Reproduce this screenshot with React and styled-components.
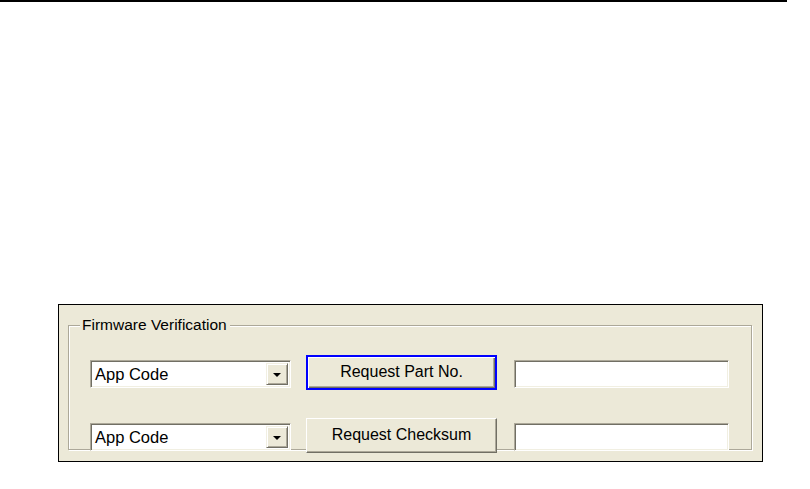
import styled, { createGlobalStyle } from 'styled-components'

const GlobalStyle = createGlobalStyle`
  html, body {
    margin: 0;
    padding: 0;
    background: #ffffff;
  }
  body {
    font-family: "Liberation Sans", Arial, sans-serif;
  }
`

const rows = [
  { id: 'part', label: 'Request Part No.', focused: true },
  { id: 'sum', label: 'Request Checksum', focused: false },
]

const App = () => {
  return (
    <>
      <GlobalStyle />
      <Page>
        <TopRule />
        <Dialog>
          <GroupBox>
            <Legend>Firmware Verification</Legend>
            {rows.map((row) => (
              <Row key={row.id}>
                <Combo>
                  <ComboText>App Code</ComboText>
                  <ComboButton>
                    <Arrow />
                  </ComboButton>
                </Combo>
                <Button $focused={row.focused}>{row.label}</Button>
                <TextBox />
              </Row>
            ))}
          </GroupBox>
        </Dialog>
      </Page>
    </>
  )
}

const Page = styled.div`
  width: 810px;
  height: 489px;
  display: flex;
  flex-direction: column;
`

const TopRule = styled.div`
  width: 787px;
  height: 2px;
  background: #000;
  margin-bottom: 302px;
`

const Dialog = styled.div`
  margin-left: 58px;
  width: 705px;
  height: 158px;
  border: 1px solid #000;
  background: #ece9d8;
  padding: 20px 10px 11px 9px;
  box-sizing: border-box;
`

const GroupBox = styled.div`
  position: relative;
  height: 100%;
  box-sizing: border-box;
  border: 1px solid #aca899;
  box-shadow: inset 1px 1px 0 #fff, 1px 1px 0 #fff;
  padding: 29px 0 0 21px;
  display: flex;
  flex-direction: column;
  gap: 28px;
`

const Legend = styled.span`
  position: absolute;
  left: 11px;
  top: -10px;
  padding: 0 3px 0 2px;
  background: #ece9d8;
  font-size: 15.5px;
  line-height: 18px;
  color: #000;
`

const Row = styled.div`
  display: flex;
  align-items: center;
  height: 35px;
`

const sunken = `
  border-style: solid;
  border-width: 1px;
  border-color: #aca899 #fff #fff #aca899;
  box-shadow: inset 1px 1px 0 #716f64, inset -1px -1px 0 #f1efe2;
  box-sizing: border-box;
  background: #fff;
`

const Combo = styled.div`
  ${sunken}
  width: 201px;
  height: 28px;
  margin-top: 3px;
  display: flex;
  align-items: stretch;
  padding: 2px;
`

const ComboText = styled.div`
  flex: 1;
  font-size: 16.5px;
  line-height: 22px;
  padding-left: 2px;
  color: #000;
`

const ComboButton = styled.div`
  width: 22px;
  background: #ece9d8;
  border-style: solid;
  border-width: 1px;
  border-color: #f1efe2 #716f64 #716f64 #f1efe2;
  box-shadow: inset 1px 1px 0 #fff, inset -1px -1px 0 #aca899;
  box-sizing: border-box;
  display: flex;
  align-items: center;
  justify-content: center;
`

const Arrow = styled.div`
  width: 0;
  height: 0;
  border-left: 4px solid transparent;
  border-right: 4px solid transparent;
  border-top: 4px solid #000;
  margin-top: 1px;
`

const Button = styled.div`
  margin-left: 15px;
  width: 191px;
  height: 35px;
  box-sizing: border-box;
  background: #ece9d8;
  border-style: solid;
  border-width: ${({ $focused }) => ($focused ? '2px' : '1px')};
  border-color: ${({ $focused }) =>
    $focused ? '#0000ff' : '#fff #716f64 #716f64 #fff'};
  box-shadow: ${({ $focused }) =>
    $focused
      ? 'inset 1px 1px 0 #fff, inset -1px -1px 0 #716f64, inset -2px -2px 0 #aca899'
      : 'inset -1px -1px 0 #aca899'};
  display: flex;
  align-items: center;
  justify-content: center;
  font-size: 16px;
  color: #000;
  padding-bottom: 1px;
`

const TextBox = styled.div`
  ${sunken}
  margin-left: 17px;
  margin-top: 3px;
  width: 215px;
  height: 28px;
`

export default App
